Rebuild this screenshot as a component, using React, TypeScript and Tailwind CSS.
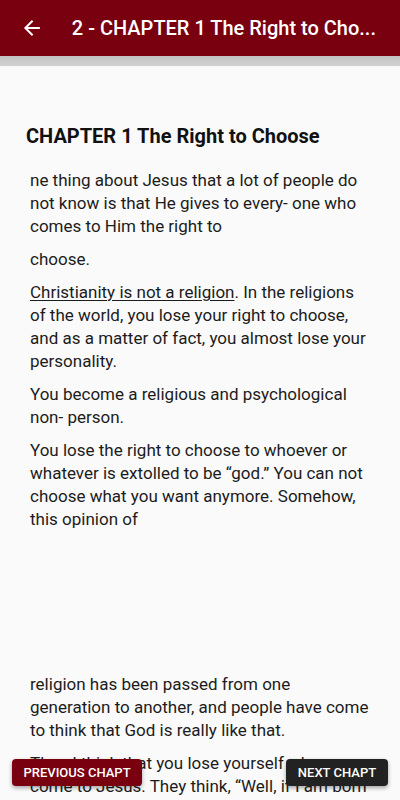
import { ReactNode } from "react";

const font = { fontFamily: "Roboto, 'Noto Sans', sans-serif" };

function BackArrow() {
  return (
    <svg width="24" height="24" viewBox="0 0 24 24" fill="white">
      <path d="M20 11H7.83l5.59-5.59L12 4l-8 8 8 8 1.41-1.41L7.83 13H20v-2z" />
    </svg>
  );
}

function P({ children }: { children: ReactNode }) {
  return <p className="mb-[10px] leading-[23px]">{children}</p>;
}

export default function App() {
  return (
    <div className="relative h-[800px] w-[400px] overflow-hidden bg-[#fafafa]" style={font}>
      <header className="flex h-14 items-center bg-[#79000f] pl-5 pr-6 text-white">
        <BackArrow />
        <h1 className="ml-7 whitespace-nowrap text-[20px] font-medium">2 - CHAPTER 1 The Right to Cho...</h1>
      </header>
      <div className="h-[10px] bg-gradient-to-b from-[#c2c2c2] to-[#d2d2d2]" />

      <main className="pl-[26px] pr-[30px] pt-[57px]">
        <h2 className="text-[20px] font-bold leading-[26px] text-[#111]">CHAPTER 1 The Right to Choose</h2>
        <div className="mt-[20px] pl-1 text-[17px] text-[#1c1c1c]">
          <P>ne thing about Jesus that a lot of people do not know is that He gives to every- one who comes to Him the right to</P>
          <P>choose.</P>
          <P>
            <span className="underline decoration-1 underline-offset-2">Christianity is not a religion</span>. In the religions of the world, you lose your right to choose, and as a matter of fact, you almost lose your personality.
          </P>
          <P>You become a religious and psychological non- person.</P>
          <P>You lose the right to choose to whoever or whatever is extolled to be “god.” You can not choose what you want anymore. Somehow, this opinion of</P>
          <div className="h-[132px]" />
          <P>religion has been passed from one generation to another, and people have come to think that God is really like that.</P>
          <P>Then I think that you lose yourself when you come to Jesus. They think, “Well, if I am born again, I will lose my freedom.”</P>
        </div>
      </main>

      <button className="absolute bottom-[14px] left-3 h-[27px] w-[130px] rounded-sm bg-[#79000f] text-[13px] font-medium text-white shadow-[0_2px_4px_rgba(0,0,0,0.35)]">
        PREVIOUS CHAPT
      </button>
      <button className="absolute bottom-[14px] right-3 h-[27px] w-[102px] rounded-sm bg-[#222] text-[13px] font-medium text-white shadow-[0_2px_4px_rgba(0,0,0,0.35)]">
        NEXT CHAPT
      </button>
    </div>
  );
}
